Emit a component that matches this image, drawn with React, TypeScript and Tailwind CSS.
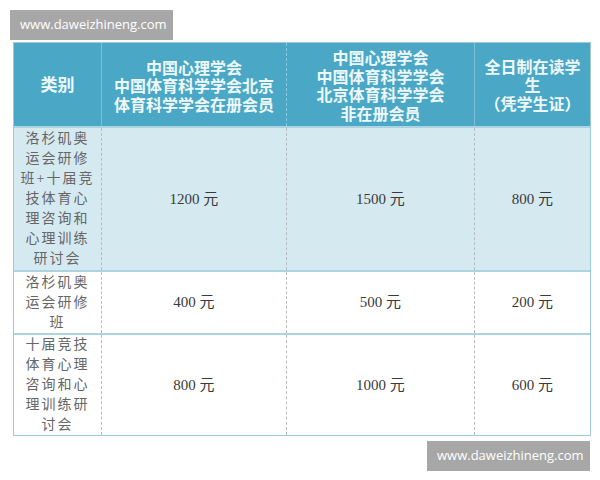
import React from "react";

const serif = { fontFamily: '"Liberation Serif", "Noto Sans CJK SC", serif' };
const sans = { fontFamily: '"Noto Sans CJK SC", "Noto Sans", sans-serif' };

interface Row {
  name: string[];
  prices: string[];
  height: string;
  bg: string;
}

const rows: Row[] = [
  {
    name: ["洛杉矶奥", "运会研修", "班+十届竞", "技体育心", "理咨询和", "心理训练", "研讨会"],
    prices: ["1200 元", "1500 元", "800 元"],
    height: "h-[144px]",
    bg: "bg-[#d5e9f0]",
  },
  {
    name: ["洛杉矶奥", "运会研修", "班"],
    prices: ["400 元", "500 元", "200 元"],
    height: "h-[63px]",
    bg: "bg-white",
  },
  {
    name: ["十届竞技", "体育心理", "咨询和心", "理训练研", "讨会"],
    prices: ["800 元", "1000 元", "600 元"],
    height: "h-[102px]",
    bg: "bg-white",
  },
];

function Watermark() {
  return (
    <div
      className="flex h-[30px] w-[163px] items-center bg-[#a7a7a7] pl-[10px] text-[13px] text-white"
      style={{ fontFamily: '"Open Sans", "Liberation Sans", sans-serif' }}
    >
      www.daweizhineng.com
    </div>
  );
}

export default function App() {
  return (
    <div className="h-[480px] w-[600px] bg-white pt-[10px]">
      <div className="ml-[10px]">
        <Watermark />
      </div>

      <div className="ml-[13px] mt-[2px] w-[578px] border border-[#9fc9d7]">
        {/* header */}
        <div
          className="grid h-[83px] grid-cols-[88px_185px_188px_115px] bg-[#4aa8c6] text-[16px] font-bold leading-[18.5px] text-[#eef8fb]"
          style={sans}
        >
          <div className="flex items-center justify-center border-r border-[#7cc0d6] text-[17px]">
            类别
          </div>
          <div className="flex flex-col items-center justify-center border-r border-dashed border-[#8ccadd] pt-[2px] text-center">
            <span>中国心理学会</span>
            <span>中国体育科学学会北京</span>
            <span>体育科学学会在册会员</span>
          </div>
          <div className="flex flex-col items-center justify-center border-r border-[#7cc0d6] pt-[1px] text-center">
            <span>中国心理学会</span>
            <span>中国体育科学学会</span>
            <span>北京体育科学学会</span>
            <span>非在册会员</span>
          </div>
          <div className="flex flex-col items-center justify-center text-center">
            <span>全日制在读学</span>
            <span>生</span>
            <span>（凭学生证）</span>
          </div>
        </div>

        {/* body */}
        {rows.map((r, i) => (
          <div
            key={i}
            className={`grid grid-cols-[88px_185px_188px_115px] border-t-2 border-[#add3e0] ${r.height} ${r.bg}`}
          >
            <div
              className="flex flex-col items-center justify-center border-r border-dashed border-[#b5bcc0] text-[14px] leading-[20px] tracking-[2px] text-[#666]"
              style={serif}
            >
              {r.name.map((l, j) => (
                <span key={j}>{l}</span>
              ))}
            </div>
            {r.prices.map((p, j) => (
              <div
                key={j}
                className={`flex items-center justify-center text-[15px] text-[#3a3a3a] ${
                  j < 2 ? "border-r border-dashed border-[#b5bcc0]" : ""
                }`}
                style={serif}
              >
                {p}
              </div>
            ))}
          </div>
        ))}
      </div>

      <div className="ml-[427px] mt-[5px]">
        <Watermark />
      </div>
    </div>
  );
}
